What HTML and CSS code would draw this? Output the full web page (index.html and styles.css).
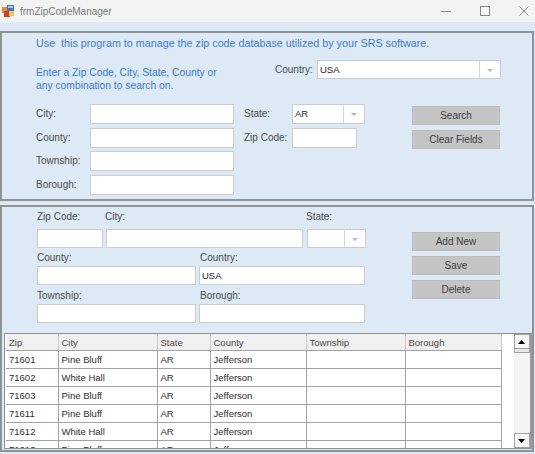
FILE: index.html
```html
<!DOCTYPE html>
<html lang="en">
<head>
<meta charset="UTF-8" />
<title>frmZipCodeManager</title>
<link rel="stylesheet" href="styles.css">
</head>
<body>

<div class="window">
  <div class="titlebar">
    <svg class="appIcon" width="12" height="12" viewBox="0 0 12 12">
      <rect x="0" y="2" width="6" height="6" fill="#e0902c" />
      <rect x="5" y="0" width="7" height="6" fill="#3a78c8" />
      <rect x="2" y="6" width="6" height="6" fill="#c8402c" />
      <rect x="7" y="6" width="5" height="5" fill="#f2c94c" />
      <rect x="6" y="1" width="5" height="2" fill="#ffffff" opacity="0.6" />
    </svg>
    <span class="title">frmZipCodeManager</span>
    <div class="winControls">
      <svg width="12" height="12" viewBox="0 0 12 12"><line x1="1" y1="6.5" x2="11" y2="6.5" stroke="#8a8a8a" /></svg>
      <svg width="12" height="12" viewBox="0 0 12 12"><rect x="1.5" y="1.5" width="9" height="9" fill="none" stroke="#8a8a8a" /></svg>
      <svg width="12" height="12" viewBox="0 0 12 12"><path d="M1.5 1.5 L10.5 10.5 M10.5 1.5 L1.5 10.5" stroke="#8a8a8a" /></svg>
    </div>
  </div>

  <div class="client">

    <!-- поиск -->
    <section class="group searchGroup">
      <p class="intro">Use&nbsp; this program to manage the zip code database utilized by your SRS software.</p>
      <div class="introRow">
        <p class="hint">Enter a Zip Code, City, State, County or<br>any combination to search on.</p>
        <span class="lbl countryLbl">Country:</span>
        <div class="combo countryCombo"><span>USA</span><i class="arrow"></i></div>
      </div>

      <div class="searchGrid">
        <span class="lbl col1">City:</span>
        <div class="field col2"></div>
        <span class="lbl col4">State:</span>
        <div class="combo col5"><span>AR</span><i class="arrow"></i></div>
        <button class="btn col7">Search</button>

        <span class="lbl col1">County:</span>
        <div class="field col2"></div>
        <span class="lbl col4">Zip Code:</span>
        <div class="field col5 zipSmall"></div>
        <button class="btn col7">Clear Fields</button>

        <span class="lbl col1">Township:</span>
        <div class="field col2"></div>

        <span class="lbl col1">Borough:</span>
        <div class="field col2"></div>
      </div>
    </section>

    <!-- редактирование -->
    <section class="group editGroup">
      <div class="editTop">
        <div class="editForm">
          <div class="editRow">
            <div class="cell w66"><span class="lbl">Zip Code:</span><div class="field"></div></div>
            <div class="cell w196"><span class="lbl">City:</span><div class="field"></div></div>
            <div class="cell w59"><span class="lbl">State:</span><div class="combo"><span></span><i class="arrow"></i></div></div>
          </div>
          <div class="editRow">
            <div class="cell w159"><span class="lbl">County:</span><div class="field"></div></div>
            <div class="cell w166"><span class="lbl">Country:</span><div class="field">USA</div></div>
          </div>
          <div class="editRow">
            <div class="cell w159"><span class="lbl">Township:</span><div class="field"></div></div>
            <div class="cell w166"><span class="lbl">Borough:</span><div class="field"></div></div>
          </div>
        </div>
        <div class="editButtons">
          <button class="btn">Add New</button>
          <button class="btn">Save</button>
          <button class="btn">Delete</button>
        </div>
      </div>

      <div class="gridFrame">
        <table class="dataGrid">
          <colgroup>
            <col style="width:52px"><col style="width:99px"><col style="width:53px">
            <col style="width:96px"><col style="width:99px"><col style="width:96px">
          </colgroup>
          <thead>
            <tr><th>Zip</th><th>City</th><th>State</th><th>County</th><th>Township</th><th>Borough</th></tr>
          </thead>
          <tbody>
            <tr><td>71601</td><td>Pine Bluff</td><td>AR</td><td>Jefferson</td><td></td><td></td></tr>
            <tr><td>71602</td><td>White Hall</td><td>AR</td><td>Jefferson</td><td></td><td></td></tr>
            <tr><td>71603</td><td>Pine Bluff</td><td>AR</td><td>Jefferson</td><td></td><td></td></tr>
            <tr><td>71611</td><td>Pine Bluff</td><td>AR</td><td>Jefferson</td><td></td><td></td></tr>
            <tr><td>71612</td><td>White Hall</td><td>AR</td><td>Jefferson</td><td></td><td></td></tr>
            <tr><td>71613</td><td>Pine Bluff</td><td>AR</td><td>Jefferson</td><td></td><td></td></tr>
          </tbody>
        </table>
        <div class="vscroll">
          <div class="sbBtn"><svg width="7" height="4" viewBox="0 0 7 4"><path d="M0 4 L3.5 0 L7 4 Z" fill="#000" /></svg></div>
          <div class="sbThumb"></div>
          <div class="sbTrack"></div>
          <div class="sbBtn"><svg width="7" height="4" viewBox="0 0 7 4"><path d="M0 0 L3.5 4 L7 0 Z" fill="#000" /></svg></div>
        </div>
      </div>
    </section>

  </div>
</div>

</body>
</html>
```

FILE: styles.css
```css
body {
  margin: 0;
  font-family: "Liberation Sans", Arial, sans-serif;
  font-size: 10px;
  color: #4a4a4a;
  background: #dde9f5;
}

.window {
  width: 535px;
  height: 454px;
  overflow: hidden;
  display: flex;
  flex-direction: column;
}

/* заголовок окна */
.titlebar {
  height: 22px;
  flex: none;
  background: #f3f3f3;
  display: flex;
  align-items: center;
}
.appIcon { margin: 0 6px 0 2px; }
.title {
  color: #7a7a7a;
  font-size: 10px;
}
.winControls {
  margin-left: auto;
  display: flex;
  gap: 27px;
  padding-right: 5px;
}

.client {
  flex: 1;
  background: #dde9f5;
  padding-top: 9px;
}

.group {
  width: 530px;
  border: 2px solid #8e9398;
  box-sizing: content-box;
}

p { margin: 0; }

.lbl {
  color: #4a4a4a;
  line-height: 20px;
  white-space: nowrap;
}

.field, .combo {
  height: 19px;
  background: #fff;
  border: 1px solid #c9cdd2;
  box-sizing: border-box;
  font-size: 9.5px;
  color: #222;
  line-height: 17px;
  padding-left: 2px;
}
.combo {
  display: flex;
  justify-content: space-between;
}
.combo .arrow {
  width: 20px;
  border-left: 1px solid #d6d9dc;
  position: relative;
}
.combo .arrow::after {
  content: "";
  position: absolute;
  left: 7px;
  top: 8px;
  border-left: 3px solid transparent;
  border-right: 3px solid transparent;
  border-top: 3px solid #b8b8b8;
}

.btn {
  height: 19px;
  background: #c4c4c4;
  border: 1px solid #bcbcbc;
  color: #3c3c3c;
  font-family: inherit;
  font-size: 10px;
  padding: 0;
}

/* блок поиска */
.searchGroup {
  height: 166px;
}
.intro {
  margin: 4px 0 0 34px;
  line-height: 12px;
  font-size: 10.75px;
  color: #3c7bd0;
}
.introRow {
  display: flex;
  margin-top: 11px;
  padding-left: 34px;
}
.hint {
  width: 239px;
  padding-top: 6px;
  line-height: 13px;
  font-size: 10.3px;
  color: #3c7bd0;
}
.countryLbl { width: 42px; }
.countryCombo { width: 184px; }

.searchGrid {
  display: grid;
  grid-template-columns: 54px 144px 10px 48px 73px 47px 88px;
  grid-template-rows: 20px 20px 20px 19px;
  row-gap: 3.6px;
  margin-top: 12px;
  padding-left: 34px;
}
.searchGrid .field, .searchGrid .combo { height: 20px; }
.searchGrid .col1 { grid-column: 1; }
.searchGrid .col2 { grid-column: 2; }
.searchGrid .col4 { grid-column: 4; }
.searchGrid .col5 { grid-column: 5; }
.searchGrid .col7 { grid-column: 7; margin-top: 2px; }
.searchGrid .zipSmall { width: 65px; }

/* блок редактирования */
.editGroup {
  margin-top: 4px;
  height: 243px;
}
.editTop {
  display: flex;
  padding: 4px 0 0 34px;
}
.editForm {
  width: 331px;
}
.editRow {
  display: flex;
  gap: 3px;
  margin-bottom: 4px;
}
.editRow:nth-child(2) { margin-bottom: 5px; }
.cell {
  display: flex;
  flex-direction: column;
}
.cell .lbl {
  line-height: 12px;
  margin-bottom: 2px;
}
.editRow:first-child .cell .lbl { margin-bottom: 6px; }
.w66 { width: 66px; padding-left: 1px; }
.w196 { width: 197px; }
.w59 { width: 59px; margin-left: 1px; }
.w159 { width: 159px; padding-left: 1px; }
.w166 { width: 166px; }
.w196 .lbl, .w59 .lbl { margin-left: -1px; }
.w166 .lbl { margin-left: 1px; }

.editButtons {
  display: flex;
  flex-direction: column;
  gap: 5px;
  margin: 21px 0 0 45px;
  width: 88px;
}

.gridFrame {
  margin: 6px 0 0 2px;
  width: 525px;
  height: 114px;
  border: 1px solid #8f8f8f;
  border-right: 2px solid #9a9a9a;
  background: #fff;
  display: flex;
  overflow: hidden;
}
.dataGrid {
  border-collapse: collapse;
  table-layout: fixed;
  width: 495px;
  height: max-content;
  margin-left: 1px;
}
.dataGrid th, .dataGrid td {
  height: 17px;
  padding: 0 0 0 3px;
  text-align: left;
  font-weight: normal;
  white-space: nowrap;
  overflow: hidden;
  border: 1px solid #a3a3a3;
  border-top: none;
  color: #2e2e2e;
  font-size: 9.5px;
}
.dataGrid th {
  background: #f0f0f0;
  color: #4a4a4a;
  height: 16px;
  border-right-color: #c8c8c8;
}
.dataGrid tr > :first-child { border-left: none; }

.vscroll {
  margin-left: 12px;
  width: 16px;
  display: flex;
  flex-direction: column;
  background: #f4f4f4;
}
.sbBtn {
  height: 15px;
  border: 1px solid #a0a0a0;
  background: #f7f7f7;
  display: flex;
  align-items: center;
  justify-content: center;
  box-sizing: border-box;
}
.sbThumb {
  height: 3px;
  border: 1px solid #a0a0a0;
  border-top: none;
  background: #e8e8e8;
}
.sbTrack { flex: 1; }
```
